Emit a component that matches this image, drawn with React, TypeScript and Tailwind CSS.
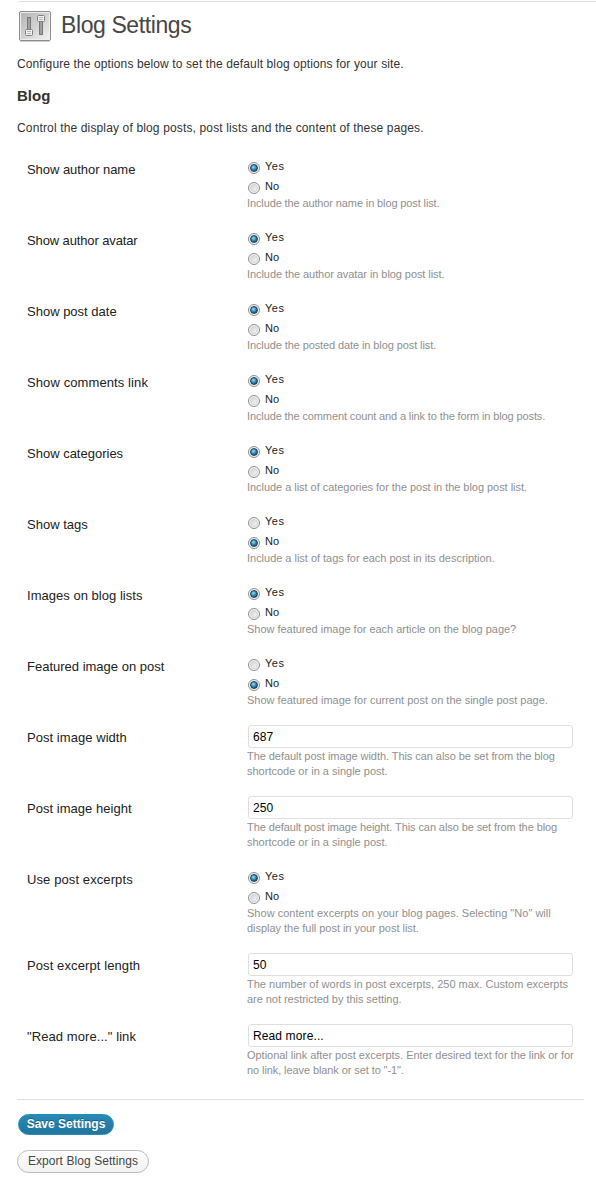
import { useState } from "react";

interface HelpLine {
  text: string;
  className?: string;
}

interface Setting {
  label: string;
  labelClass?: string;
  type: "radio" | "text";
  value: string;
  help: HelpLine[];
}

const settings: Setting[] = [
  {
    label: "Show author name",
    labelClass: "tracking-[-0.05px]",
    type: "radio",
    value: "Yes",
    help: [{ text: "Include the author name in blog post list.", className: "tracking-[-0.12px]" }],
  },
  {
    label: "Show author avatar",
    labelClass: "tracking-[-0.12px]",
    type: "radio",
    value: "Yes",
    help: [{ text: "Include the author avatar in blog post list.", className: "tracking-[-0.07px]" }],
  },
  {
    label: "Show post date",
    type: "radio",
    value: "Yes",
    help: [{ text: "Include the posted date in blog post list.", className: "tracking-[-0.1px]" }],
  },
  {
    label: "Show comments link",
    labelClass: "tracking-[0.1px]",
    type: "radio",
    value: "Yes",
    help: [{ text: "Include the comment count and a link to the form in blog posts.", className: "tracking-[-0.12px]" }],
  },
  {
    label: "Show categories",
    type: "radio",
    value: "Yes",
    help: [{ text: "Include a list of categories for the post in the blog post list.", className: "tracking-[-0.04px]" }],
  },
  {
    label: "Show tags",
    type: "radio",
    value: "No",
    help: [{ text: "Include a list of tags for each post in its description.", className: "tracking-[-0.02px]" }],
  },
  {
    label: "Images on blog lists",
    labelClass: "tracking-[0.03px]",
    type: "radio",
    value: "Yes",
    help: [{ text: "Show featured image for each article on the blog page?", className: "tracking-[-0.02px]" }],
  },
  {
    label: "Featured image on post",
    type: "radio",
    value: "No",
    help: [{ text: "Show featured image for current post on the single post page." }],
  },
  {
    label: "Post image width",
    labelClass: "tracking-[0.05px]",
    type: "text",
    value: "687",
    help: [
      { text: "The default post image width. This can also be set from the blog", className: "tracking-[-0.06px]" },
      { text: "shortcode or in a single post." },
    ],
  },
  {
    label: "Post image height",
    labelClass: "tracking-[0.03px]",
    type: "text",
    value: "250",
    help: [
      { text: "The default post image height. This can also be set from the blog", className: "tracking-[-0.09px]" },
      { text: "shortcode or in a single post." },
    ],
  },
  {
    label: "Use post excerpts",
    labelClass: "tracking-[0.1px]",
    type: "radio",
    value: "Yes",
    help: [
      { text: 'Show content excerpts on your blog pages. Selecting "No" will', className: "tracking-[0.02px]" },
      { text: "display the full post in your post list.", className: "tracking-[-0.03px]" },
    ],
  },
  {
    label: "Post excerpt length",
    labelClass: "tracking-[0.1px]",
    type: "text",
    value: "50",
    help: [
      { text: "The number of words in post excerpts, 250 max. Custom excerpts" },
      { text: "are not restricted by this setting.", className: "tracking-[-0.04px]" },
    ],
  },
  {
    label: '"Read more..." link',
    labelClass: "tracking-[0.08px]",
    type: "text",
    value: "Read more...",
    help: [
      { text: "Optional link after post excerpts. Enter desired text for the link or for", className: "tracking-[-0.03px]" },
      { text: 'no link, leave blank or set to "-1".', className: "tracking-[-0.09px]" },
    ],
  },
];

function SettingsIcon() {
  return (
    <svg className="w-8 h-8 shrink-0" viewBox="0 0 32 32" fill="none">
      <defs>
        <linearGradient id="tile" x1="0" y1="0" x2="1" y2="1">
          <stop offset="0" stopColor="#b0b0b0" />
          <stop offset="1" stopColor="#f4f4f4" />
        </linearGradient>
      </defs>
      <rect x="0.5" y="0.5" width="31" height="29" rx="1.5" fill="url(#tile)" stroke="#8c8c8c" />
      <rect x="1.5" y="1.5" width="29" height="27" rx="0.5" stroke="#eeeeee" />
      <path d="M1 30.5h30" stroke="#d0d0d0" />
      <rect x="8.5" y="6.5" width="3" height="13" fill="#a0a0a0" stroke="#777777" />
      <rect x="20.5" y="10.5" width="3" height="13" fill="#a0a0a0" stroke="#777777" />
      <rect x="6.5" y="18.5" width="7" height="6" rx="1" fill="#f2f2f2" stroke="#808080" />
      <path d="M8 20.5h4M8 22.5h4" stroke="#b4b4b4" />
      <rect x="18.5" y="4.5" width="7" height="6" rx="1" fill="#f2f2f2" stroke="#808080" />
      <path d="M20 6.5h4M20 8.5h4" stroke="#b4b4b4" />
    </svg>
  );
}

function RadioDot({ checked }: { checked: boolean }) {
  return (
    <span className="w-3 h-3 mt-[5px] ml-px rounded-full border border-[#8e8f8f] bg-[#f4f4f4] flex items-center justify-center shrink-0">
      {checked ? (
        <span className="w-2 h-2 rounded-full border border-[#25394c] bg-[radial-gradient(circle_at_40%_35%,#8be0fa_0%,#2c8fc0_45%,#0b3458_100%)]"></span>
      ) : (
        <span className="w-2 h-2 rounded-full border border-[#d0d2d4] bg-linear-to-br from-[#d3d5d8] to-[#f6f6f6]"></span>
      )}
    </span>
  );
}

function SettingRow({ setting }: { setting: Setting }) {
  const [value, setValue] = useState(setting.value);

  return (
    <div className="flex pb-4">
      <div className={`w-[220px] shrink-0 pt-[3px] text-[13px] leading-5 text-[#222222] ${setting.labelClass ?? ""}`}>
        {setting.label}
      </div>
      <div className="flex-1 min-h-[55px]">
        {setting.type === "radio" ? (
          <div className="-mb-px">
            {["Yes", "No"].map((option) => (
              <label key={option} className="flex h-5">
                <input
                  type="radio"
                  name={setting.label}
                  className="sr-only"
                  checked={value === option}
                  onChange={() => setValue(option)}
                />
                <RadioDot checked={value === option} />
                <span className={`ml-[5px] text-[11px] leading-[19px] text-[#222222] ${option === "Yes" ? "tracking-[0.5px]" : ""}`}>
                  {option}
                </span>
              </label>
            ))}
          </div>
        ) : (
          <input
            type="text"
            value={value}
            onChange={(e) => setValue(e.target.value)}
            className="block ml-px mb-px w-[325px] h-[23px] px-1 rounded-[3px] border border-[#dfdfdf] bg-white text-[12px] tracking-[0.12px] text-black outline-none"
          />
        )}
        {setting.help.map((line) => (
          <p key={line.text} className={`text-[11px] leading-[15px] text-[#909090] whitespace-nowrap ${line.className ?? ""}`}>
            {line.text}
          </p>
        ))}
        {setting.type === "radio" && setting.help.length > 1 && <div className="h-px"></div>}
      </div>
    </div>
  );
}

export default function App() {
  return (
    <div className="w-full h-[1200px] overflow-hidden bg-white pl-[17px] pr-3 font-['Liberation_Sans',Arial,sans-serif] text-[#333333]">
      {/* Page header */}
      <div className="ml-0.5 -mr-3 mt-px border-t border-[#dfdfdf]"></div>
      <div className="flex h-[49px] pt-[9px] pl-0.5">
        <SettingsIcon />
        <h1 className="ml-[10px] -mt-0.5 text-[23px] leading-8 tracking-[-0.4px] text-[#464646]">Blog Settings</h1>
      </div>

      <p className="mt-[3px] text-[12px] leading-5 tracking-[0.115px]">
        Configure the options below to set the default blog options for your site.
      </p>
      <h2 className="mt-3 text-[15px] leading-5 font-bold">Blog</h2>
      <p className="mt-3 text-[12px] leading-5 tracking-[0.145px]">
        Control the display of blog posts, post lists and the content of these pages.
      </p>

      {/* Settings */}
      <div className="mt-[19px] pl-[10px]">
        {settings.map((setting) => (
          <SettingRow key={setting.label} setting={setting} />
        ))}
      </div>

      {/* Actions */}
      <div className="mt-1 border-t border-[#dfdfdf] pt-[14px] flex flex-col items-start">
        <button className="ml-px w-24 h-[21px] rounded-full border border-[#298cba] bg-linear-to-b from-[#278ab7] to-[#21759b] text-[12px] leading-[19px] font-bold text-white whitespace-nowrap [text-shadow:0_-1px_0_rgba(0,0,0,0.3)]">
          Save Settings
        </button>
        <button className="mt-[15px] w-[132px] h-[23px] rounded-full border border-[#bbbbbb] bg-linear-to-b from-white to-[#f2f2f2] text-[12px] leading-[21px] tracking-[0.07px] text-[#464646] whitespace-nowrap">
          Export Blog Settings
        </button>
      </div>
    </div>
  );
}
